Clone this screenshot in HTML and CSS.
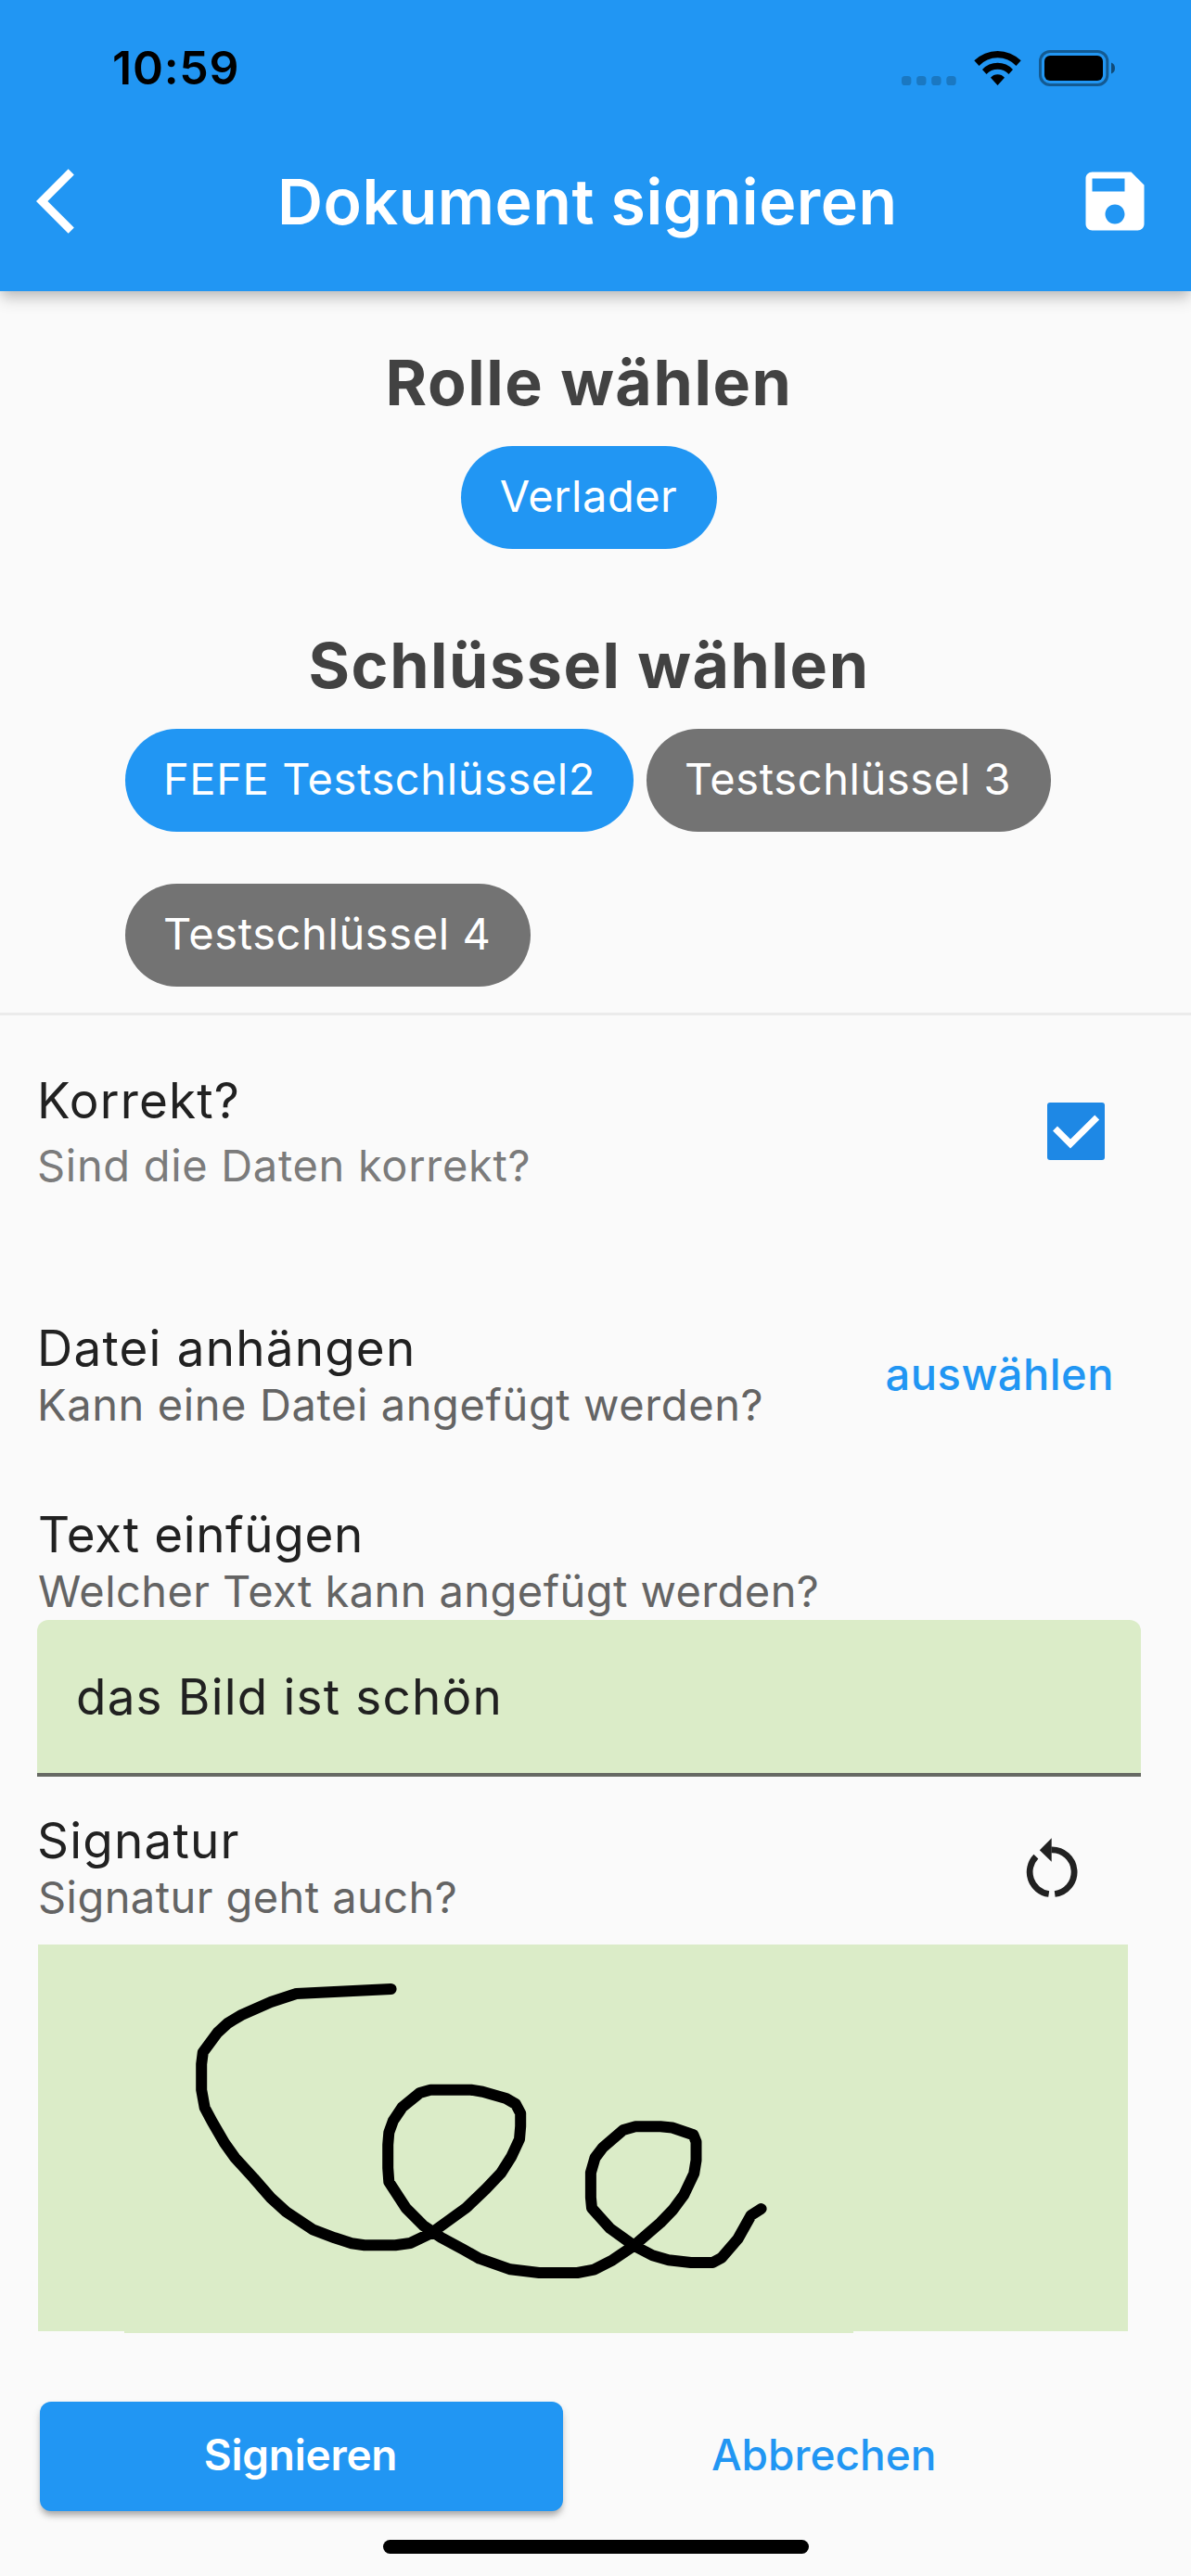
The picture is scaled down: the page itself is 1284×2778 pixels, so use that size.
FILE: index.html
```html
<!DOCTYPE html>
<html lang="de">
<head>
<meta charset="utf-8">
<title>Dokument signieren</title>
<link rel="stylesheet" href="styles.css">
</head>
<body>
<header class="header">
  <div class="status">
    <span class="time">10:59</span>
    <svg class="dots" width="59" height="10" viewBox="0 0 59 10"><g fill="#000" fill-opacity=".2"><rect width="10.4" height="10" rx="3.6"/><rect x="16.1" width="10.4" height="10" rx="3.6"/><rect x="32.2" width="10.4" height="10" rx="3.6"/><rect x="48.3" width="10.4" height="10" rx="3.6"/></g></svg>
    <svg class="wifi" width="51" height="37" viewBox="0 0 51 37"><path d="M.3 10.3A36 36 0 0 1 50.7 10.3L45.5 16A27.3 27.3 0 0 0 5.5 16ZM9 20A22.3 22.3 0 0 1 42 20L37.5 25A16.2 16.2 0 0 0 13.5 25ZM18 28.7A10 10 0 0 1 33 28.7L25.5 37Z"/></svg>
    <svg class="battery" width="82" height="39" viewBox="0 0 82 39"><rect x="1.5" y="1.5" width="72.3" height="36" rx="10.5" fill="none" stroke="#000" stroke-opacity=".4" stroke-width="3"/><rect x="6" y="6" width="63" height="27" rx="6"/><path d="M78 13.5Q82 15 82 19.5T78 25.500Z" fill-opacity=".5"/></svg>
  </div>
  <div class="appbar">
    <svg width="84" height="84" viewBox="0 0 24 24" fill="#fff"><path d="M11.67 3.87 9.9 2.1 0 12l9.9 9.9 1.77-1.77L3.54 12z"/></svg>
    <h1 class="title">Dokument signieren</h1>
    <svg class="save" width="84" height="84" viewBox="0 0 24 24" fill="#fff"><path d="M17 3H5c-1.110 0-2 .9-2 2v14c0 1.100.89 2 2 2h14c1.100 0 2-.9 2-2V7l-4-4zm-5 16c-1.660 0-3-1.340-3-3s1.340-3 3-3 3 1.340 3 3-1.340 3-3 3zm3-10H5V5h10v4z"/></svg>
  </div>
</header>
<main>
  <section class="choice">
    <h2 class="heading">Rolle wählen</h2>
    <div class="chips chips-center"><span class="chip chip-on chip-role">Verlader</span></div>
  </section>
  <section class="choice choice-keys">
    <h2 class="heading">Schlüssel wählen</h2>
    <div class="chips">
      <span class="chip chip-on">FEFE Testschlüssel2</span>
      <span class="chip chip-key">Testschlüssel 3</span>
      <span class="chip chip-key">Testschlüssel 4</span>
    </div>
  </section>
  <section class="fields">
    <div class="row row-check">
      <div class="label"><div class="name">Korrekt?</div><div class="hint hint-light">Sind die Daten korrekt?</div></div>
      <svg width="62" height="62" viewBox="0 0 62 62"><rect width="62" height="62" rx="3" fill="#1e88e5"/><path d="M8.500 28 25 44.500 53.700 16" fill="none" stroke="#fff" stroke-width="7"/></svg>
    </div>
    <div class="row row-file">
      <div class="label"><div class="name">Datei anhängen</div><div class="hint">Kann eine Datei angefügt werden?</div></div>
      <span class="link">auswählen</span>
    </div>
    <div class="row row-text">
      <div class="label"><div class="name name-tight">Text einfügen</div><div class="hint hint-tight">Welcher Text kann angefügt werden?</div></div>
    </div>
    <div class="input">das Bild ist schön</div>
    <div class="row row-sign">
      <div class="label"><div class="name">Signatur</div><div class="hint hint-tight">Signatur geht auch?</div></div>
      <svg width="84" height="84" viewBox="0 0 84 84"><path d="M38.700 70.500A23.900 23.900 0 0 1 24.900 30.200M41.500 22.900A23.900 23.900 0 0 1 45.200 70.500" fill="none" stroke="#212121" stroke-width="6.800"/><path d="M28.800 23.200 41.700 10.200V35.800Z" fill="#212121"/></svg>
    </div>
    <svg class="pad" width="1175" height="417" viewBox="0 0 1175 417"><polyline fill="none" stroke="#000" stroke-width="12" stroke-linecap="round" stroke-linejoin="round" points="380.600,48 278.400,53 251,62 219.300,76 204.400,85 193.500,95 177.800,116.300 176.200,129 176.200,156.700 179.700,176 187.700,191 201,214 212.400,230 232.500,252 251,273.300 267.500,288.300 296.800,307.700 319.700,316.300 338.100,322.300 351.900,324.300 385.200,324.300 401.300,322 424.200,311 461.500,284 482.800,263.700 498.900,246.700 510.300,228.700 519,210 520.200,196 520.200,182 514.900,172 504.600,166 479.300,158.700 466.700,156.700 423.100,156.700 411.600,160 392.700,175.300 382.900,190 378.300,202.700 377.200,216 377.200,241 378.300,256 396.700,284.300 415.600,303.300 434.600,316 458.700,329 475.900,338.700 509.200,350.300 540.200,354 581.500,354 599.300,350.700 619.400,340.300 642.400,324.700 671,300 684.500,286 696.300,270 707.200,247 709.500,232.700 709.500,212.700 706.500,205.300 683.700,197.500 671,196.300 644.100,196.300 630.900,200 609.100,218.700 600.500,230 595.900,246 595.900,272.700 597,284.300 616.500,306 642.400,324.700 662.500,335.300 679.700,340.300 703.800,343 727.300,343 737.100,337.700 754.300,317.700 768.700,292 779.600,285"/></svg>
    <div class="pad-edge"></div>
  </section>
</main>
<footer class="actions">
  <span class="btn btn-primary">Signieren</span>
  <span class="btn btn-flat">Abbrechen</span>
</footer>
<div class="home"></div>
</body>
</html>
```
FILE: styles.css
```css
* { box-sizing: border-box; }
body {
  margin: 0;
  width: 1284px;
  height: 2778px;
  overflow: hidden;
  background: #fafafa;
  color: #212121;
  font-family: Inter, "Liberation Sans", sans-serif;
  white-space: nowrap;
}
svg { display: block; flex: none; }
h1, h2 { margin: 0; }

.header {
  position: relative;
  height: 314px;
  background: #2196f3;
  box-shadow: 0 6px 12px -3px rgba(0,0,0,.14), 0 9px 16px rgba(0,0,0,.15);
}
.status {
  display: flex;
  align-items: center;
  height: 120px;
  padding: 26px 82px 0 121px;
}
.time { flex: 1; font-size: 50px; font-weight: 600; letter-spacing: .75px; color: #000; }
.dots { margin-top: 27px; }
.wifi { margin-left: 19px; }
.battery { margin-left: 19px; }
.appbar {
  display: flex;
  align-items: center;
  height: 194px;
  padding: 0 40px 0 39px;
}
.title {
  flex: 1;
  margin-left: 176px;
  color: #fff;
  font-size: 68px;
  font-weight: 600;
  letter-spacing: .5px;
  line-height: 80px;
}

.choice { width: 1270px; padding-top: 58px; }
.choice-keys { padding-top: 85px; }
.heading {
  margin-bottom: 29px;
  text-align: center;
  color: #424242;
  font-size: 68px;
  font-weight: 700;
  letter-spacing: 1.6px;
  line-height: 80px;
}
.chips { display: flex; flex-wrap: wrap; gap: 56px 14px; padding: 0 100px 0 135px; }
.chips-center { justify-content: center; padding: 0; }
.chip {
  height: 111px;
  padding: 0 41px;
  border-radius: 56px;
  background: #737373;
  color: #fff;
  font-size: 47px;
  letter-spacing: .6px;
  line-height: 108px;
}
.chip-on { background: #2196f3; }
.chip-role { padding: 0 43px 0 42px; letter-spacing: .5px; }
.chip-key { padding-right: 43px; }

.fields { margin-top: 28px; border-top: 3px solid #ebebeb; }
.row { display: flex; align-items: center; justify-content: space-between; padding-left: 40px; }
.label { display: flex; flex-direction: column; gap: 1px; }
.name { font-size: 53px; line-height: 64px; letter-spacing: 1.2px; }
.name-tight { padding-left: 1px; letter-spacing: .63px; }
.hint { font-size: 47px; line-height: 56px; letter-spacing: .6px; color: #646464; }
.hint-tight { padding-left: 1px; letter-spacing: .43px; }
.hint-light { color: #7b7b7b; letter-spacing: .68px; }
.row-check { margin-top: 60px; padding-right: 93px; }
.row-check .label { gap: 10px; }
.row-file { margin-top: 137px; padding-right: 83px; }
.link { color: #2196f3; font-size: 47px; font-weight: 550; letter-spacing: .5px; line-height: 54px; padding-bottom: 2px; }
.row-text { margin-top: 80px; }
.input {
  width: 1190px;
  height: 169px;
  margin: 3px 0 0 40px;
  padding-left: 42px;
  border-bottom: 4px solid #666963;
  border-radius: 12px 12px 0 0;
  background: #dbecc8;
  font-size: 53px;
  letter-spacing: 1.19px;
  line-height: 166px;
}
.row-sign { margin-top: 37px; padding-right: 108px; }
.pad { margin: 23px 0 0 41px; background: #dbecc8; }
.pad-edge { width: 786px; height: 2px; margin-left: 134px; background: #dbecc8; }

.actions { display: flex; gap: 160px; margin: 74px 0 0 43px; }
.btn { height: 118px; font-size: 46px; line-height: 114px; }
.btn-primary {
  width: 564px;
  padding-right: 2px;
  border-radius: 12px;
  background: #2196f3;
  box-shadow: 0 6px 6px -2px rgba(0,0,0,.2), 0 5px 8px rgba(0,0,0,.16);
  color: #fff;
  font-weight: 600;
  letter-spacing: -.25px;
  text-align: center;
}
.btn-flat { color: #2196f3; font-weight: 500; }
.home { width: 459px; height: 15px; margin: 31px 0 0 413px; border-radius: 8px; background: #000; }
```
